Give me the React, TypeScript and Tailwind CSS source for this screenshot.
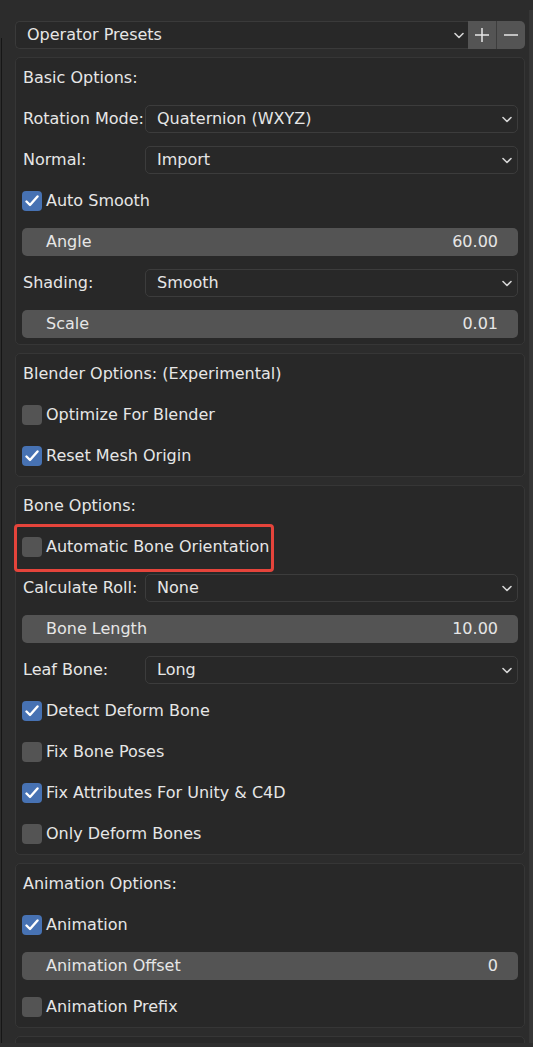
import type { ReactNode } from 'react'

const FONT = { fontFamily: '"DejaVu Sans", "Noto Sans", sans-serif' }

function Chevron() {
  return (
    <svg width="10" height="7" viewBox="0 0 10 7" className="shrink-0">
      <polyline points="1,1.5 5,5.5 9,1.5" fill="none" stroke="#d4d4d4" strokeWidth="1.6" strokeLinecap="round" strokeLinejoin="round" />
    </svg>
  )
}

function Panel({ children }: { children: ReactNode }) {
  return (
    <div className="flex shrink-0 flex-col gap-[13px] rounded-[5px] border border-[#363636] bg-[#282828] px-[6px] py-[6px]">
      {children}
    </div>
  )
}

function Heading({ text }: { text: string }) {
  return <div className="flex h-[28px] items-center pl-px">{text}</div>
}

function Select({ label, value }: { label: string; value: string }) {
  return (
    <div className="flex h-[28px] items-center">
      <div className="w-[123px] shrink-0 pl-px">{label}</div>
      <div className="flex h-[28px] flex-1 items-center justify-between rounded-[5px] border border-[#3c3c3c] bg-[#282828] pl-[11px] pr-[5px]">
        <span>{value}</span>
        <Chevron />
      </div>
    </div>
  )
}

function Slider({ label, value }: { label: string; value: string }) {
  return (
    <div className="flex h-[28px] items-center justify-between rounded-[5px] bg-[#545454] pl-[24px] pr-[20px]">
      <span>{label}</span>
      <span>{value}</span>
    </div>
  )
}

function Check({ label, checked = false, marked = false }: { label: string; checked?: boolean; marked?: boolean }) {
  return (
    <div className="relative flex h-[28px] items-center gap-[4px]">
      <div
        className={
          checked
            ? 'flex h-[20px] w-[20px] items-center justify-center rounded-[4px] bg-[#4772b3]'
            : 'h-[20px] w-[20px] rounded-[4px] bg-[#545454]'
        }
      >
        {checked && (
          <svg width="14" height="12" viewBox="0 0 14 12">
            <polyline points="1.5,6.5 5,10 12.5,1.5" fill="none" stroke="#ffffff" strokeWidth="2.4" strokeLinecap="round" strokeLinejoin="round" />
          </svg>
        )}
      </div>
      <span>{label}</span>
      {/* red annotation box from the screenshot */}
      {marked && (
        <div className="absolute left-[-8px] top-[-9px] h-[48px] w-[260px] rounded-[4px] border-[3px] border-[#e5443b]" />
      )}
    </div>
  )
}

export default function App() {
  return (
    <div className="flex h-[1047px] w-[533px] flex-col overflow-hidden bg-[#2e2e2e] text-[16px] text-[#e6e6e6]" style={FONT}>
      <div className="flex h-[1043px] shrink-0 overflow-hidden bg-[#2c2c2c]">
        <div className="flex w-[15px] shrink-0 pl-px pt-[38px]">
          <div className="w-px bg-[#161616]" />
        </div>
        <div className="flex w-[510px] shrink-0 flex-col gap-[8px] pt-[21px]">
          <div className="flex h-[28px] shrink-0">
            <div className="flex flex-1 items-center justify-between rounded-l-[5px] border border-r-0 border-[#3a3a3a] bg-[#282828] pl-[11px] pr-[4px]">
              <span>Operator Presets</span>
              <Chevron />
            </div>
            <div className="flex w-[29px] items-center justify-center border-r border-[#3d3d3d] bg-[#545454]">
              <svg width="16" height="16" viewBox="0 0 16 16">
                <path d="M8 1v14M1 8h14" stroke="#e6e6e6" strokeWidth="1.5" />
              </svg>
            </div>
            <div className="flex w-[28px] items-center justify-center rounded-r-[5px] bg-[#545454]">
              <svg width="16" height="16" viewBox="0 0 16 16">
                <path d="M1 8h14" stroke="#e6e6e6" strokeWidth="1.5" />
              </svg>
            </div>
          </div>

          <Panel>
            <Heading text="Basic Options:" />
            <Select label="Rotation Mode:" value="Quaternion (WXYZ)" />
            <Select label="Normal:" value="Import" />
            <Check label="Auto Smooth" checked />
            <Slider label="Angle" value="60.00" />
            <Select label="Shading:" value="Smooth" />
            <Slider label="Scale" value="0.01" />
          </Panel>

          <Panel>
            <Heading text="Blender Options: (Experimental)" />
            <Check label="Optimize For Blender" />
            <Check label="Reset Mesh Origin" checked />
          </Panel>

          <Panel>
            <Heading text="Bone Options:" />
            <Check label="Automatic Bone Orientation" marked />
            <Select label="Calculate Roll:" value="None" />
            <Slider label="Bone Length" value="10.00" />
            <Select label="Leaf Bone:" value="Long" />
            <Check label="Detect Deform Bone" checked />
            <Check label="Fix Bone Poses" />
            <Check label="Fix Attributes For Unity & C4D" checked />
            <Check label="Only Deform Bones" />
          </Panel>

          <Panel>
            <Heading text="Animation Options:" />
            <Check label="Animation" checked />
            <Slider label="Animation Offset" value="0" />
            <Check label="Animation Prefix" />
          </Panel>

          {/* next panel, scrolled out of view */}
          <div className="h-[60px] shrink-0 rounded-[5px] border border-[#363636] bg-[#282828]" />
        </div>
        <div className="w-[4px] shrink-0" />
        <div className="mt-[10px] w-[4px] shrink-0 bg-[#363636]" />
      </div>
    </div>
  )
}
